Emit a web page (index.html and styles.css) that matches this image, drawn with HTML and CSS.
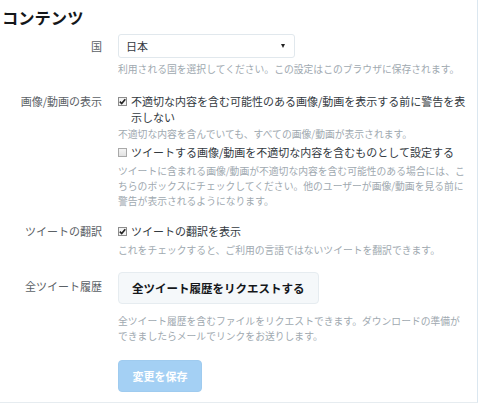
FILE: index.html
```html
<!DOCTYPE html>
<html lang="ja">
<head>
<meta charset="utf-8">
<link rel="stylesheet" href="styles.css">
</head>
<body>
<div class="page">
  <h2 class="title">コンテンツ</h2>

  <div class="row row-country">
    <div class="label label-select">国</div>
    <div class="control">
      <div class="select"><span>日本</span><span class="arrow"></span></div>
      <p class="help help-first">利用される国を選択してください。この設定はこのブラウザに保存されます。</p>
    </div>
  </div>

  <div class="row row-media">
    <div class="label">画像/動画の表示</div>
    <div class="control">
      <div class="check">
        <span class="box checked"><svg viewBox="0 0 9 9" width="9" height="9"><path d="M1.8 4.6 L3.7 6.6 L7.3 2.2" fill="none" stroke="#222" stroke-width="1.6"/></svg></span>
        <span class="check-text">不適切な内容を含む可能性のある画像/動画を表示する前に警告を表示しない</span>
      </div>
      <p class="help help-check">不適切な内容を含んでいても、すべての画像/動画が表示されます。</p>
      <div class="check check-second">
        <span class="box"></span>
        <span class="check-text">ツイートする画像/動画を不適切な内容を含むものとして設定する</span>
      </div>
      <p class="help help-check help-multi">ツイートに含まれる画像/動画が不適切な内容を含む可能性のある場合には、こちらのボックスにチェックしてください。他のユーザーが画像/動画を見る前に警告が表示されるようになります。</p>
    </div>
  </div>

  <div class="row row-translate">
    <div class="label">ツイートの翻訳</div>
    <div class="control">
      <div class="check">
        <span class="box checked"><svg viewBox="0 0 9 9" width="9" height="9"><path d="M1.8 4.6 L3.7 6.6 L7.3 2.2" fill="none" stroke="#222" stroke-width="1.6"/></svg></span>
        <span class="check-text">ツイートの翻訳を表示</span>
      </div>
      <p class="help help-translate">これをチェックすると、ご利用の言語ではないツイートを翻訳できます。</p>
    </div>
  </div>

  <div class="row row-archive">
    <div class="label label-button">全ツイート履歴</div>
    <div class="control">
      <button class="btn">全ツイート履歴をリクエストする</button>
      <p class="help help-archive">全ツイート履歴を含むファイルをリクエストできます。ダウンロードの準備ができましたらメールでリンクをお送りします。</p>
    </div>
  </div>

  <div class="row row-save">
    <div class="label"></div>
    <div class="control">
      <button class="btn-save">変更を保存</button>
    </div>
  </div>
</div>
</body>
</html>
```

FILE: styles.css
```css
html, body {
  margin: 0;
  padding: 0;
  background: #ffffff;
}

body {
  font-family: "Noto Sans CJK JP", "Noto Sans", sans-serif;
  color: #333a3f;
}

.page {
  width: 477px;
  height: 402px;
  border-right: 1px solid #dbe7f0;
  border-bottom: 1px solid #e6ecf0;
  overflow: hidden;
}

.title {
  margin: 0;
  padding: 7px 0 0 2px;
  font-size: 16.3px;
  line-height: 20px;
  font-weight: 700;
  color: #14171a;
}

.row {
  display: grid;
  grid-template-columns: 102px 350px;
  column-gap: 16px;
}

.label {
  text-align: right;
  font-size: 11px;
  line-height: 16px;
  color: #5b6166;
}

.control {
  display: flex;
  flex-direction: column;
  align-items: flex-start;
}

.row-country {
  margin-top: 7px;
}

.label-select {
  line-height: 24px;
}

.select {
  box-sizing: border-box;
  width: 177px;
  height: 24px;
  border: 1px solid #e1e8ed;
  border-radius: 3px;
  display: flex;
  align-items: center;
  justify-content: space-between;
  padding: 0 9px 0 7px;
  font-size: 11px;
  color: #333a3f;
}

.arrow {
  width: 0;
  height: 0;
  border-left: 2.5px solid transparent;
  border-right: 2.5px solid transparent;
  border-top: 4px solid #222;
}

.help {
  margin: 0;
  font-size: 9.8px;
  line-height: 15px;
  color: #a0a9b0;
}

.help-first {
  margin-top: 4px;
}

.row-media {
  margin-top: 16px;
}

.check {
  display: flex;
  align-items: flex-start;
  font-size: 11px;
  line-height: 16px;
  color: #333a3f;
}

.check-second {
  margin-top: 2px;
}

.box {
  box-sizing: border-box;
  flex: none;
  width: 9px;
  height: 9px;
  margin-top: 4px;
  margin-right: 4px;
  border: 1px solid #a9a9a9;
  background: linear-gradient(#f4f4f4, #e2e2e2);
  display: flex;
  align-items: center;
  justify-content: center;
}

.box svg {
  display: block;
  margin: -1px;
}

.box.checked {
  border-color: #8d8d8d;
  background: #f3f3f3;
}

.check-text {
  flex: 1;
}

.help-check {
  margin-top: 2px;
}

.help-multi {
  margin-top: 4px;
}

.help-translate {
  margin-top: 4px;
}

.row-translate {
  margin-top: 14px;
}

.row-archive {
  margin-top: 14px;
}

.label-button {
  padding-top: 6px;
}

.btn {
  box-sizing: border-box;
  height: 32px;
  padding: 0 13px;
  border: 1px solid #e6ecf0;
  border-radius: 4px;
  background: #f5f8fa;
  font-family: inherit;
  font-size: 11.5px;
  font-weight: 700;
  color: #14171a;
}

.help-archive {
  margin-top: 10px;
}

.row-save {
  margin-top: 16px;
}

.btn-save {
  box-sizing: border-box;
  width: 84px;
  height: 32px;
  border: 1px solid #9fcbef;
  border-radius: 4px;
  background: #a4d0f4;
  font-family: inherit;
  font-size: 11px;
  font-weight: 700;
  color: #ffffff;
}
```
